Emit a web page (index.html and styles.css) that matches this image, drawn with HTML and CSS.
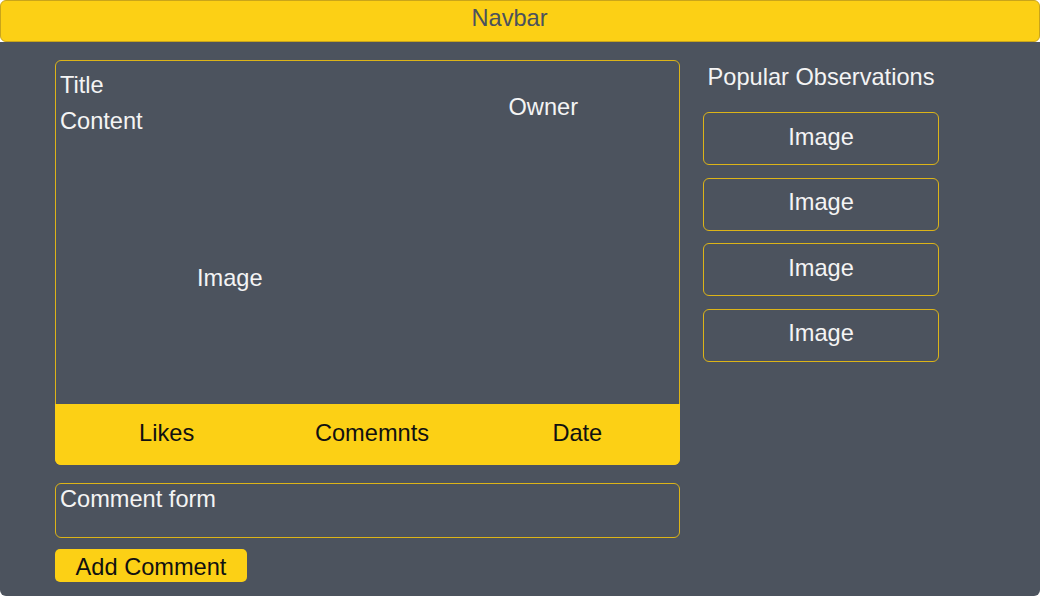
FILE: index.html
```html
<!DOCTYPE html>
<html lang="en">
<head>
<meta charset="utf-8">
<title>Observation</title>
<link rel="stylesheet" href="styles.css">
</head>
<body>
<header class="navbar">Navbar</header>
<div class="page">
  <main class="main">
    <article class="post">
      <div class="post-body">
        <div class="post-head">
          <div class="post-text">
            <div class="line">Title</div>
            <div class="line">Content</div>
          </div>
          <div class="owner">Owner</div>
        </div>
        <div class="post-image">Image</div>
      </div>
      <div class="post-foot">
        <span>Likes</span>
        <span>Comemnts</span>
        <span>Date</span>
      </div>
    </article>
    <div class="comment-form">Comment form</div>
    <button class="add-btn">Add Comment</button>
  </main>
  <aside class="side">
    <h2 class="side-title">Popular Observations</h2>
    <div class="side-list">
      <div class="side-item">Image</div>
      <div class="side-item">Image</div>
      <div class="side-item">Image</div>
      <div class="side-item">Image</div>
    </div>
  </aside>
</div>
</body>
</html>
```

FILE: styles.css
```css
html, body {
  margin: 0;
  padding: 0;
  background: #ffffff;
}
body {
  width: 1040px;
  height: 596px;
  overflow: hidden;
  font-family: "Liberation Sans", Arial, sans-serif;
  font-size: 23.6px;
  color: #f4f4f4;
}
.navbar {
  box-sizing: border-box;
  height: 42px;
  background: #fcd015;
  border: 1px solid #c9a51a;
  border-radius: 6px;
  color: #4b525d;
  text-align: center;
  line-height: 35px;
  padding-right: 21px;
}
.page {
  box-sizing: border-box;
  height: 554px;
  background: #4c535e;
  border-radius: 0 0 6px 6px;
  display: flex;
  padding: 18px 0 0 55px;
}
.main {
  width: 625px;
  display: flex;
  flex-direction: column;
  align-items: flex-start;
}
.post {
  box-sizing: border-box;
  width: 625px;
  height: 405px;
  border: 1px solid #dcb418;
  border-radius: 6px;
  display: flex;
  flex-direction: column;
}
.post-body {
  flex: 1;
  padding: 6px 0 0 4px;
}
.post-head {
  display: flex;
}
.post-text .line {
  line-height: 36px;
}
.owner {
  margin-left: auto;
  margin-right: 101px;
  margin-top: 22px;
  line-height: 36px;
}
.post-image {
  margin: 121px 0 0 137px;
  line-height: 36px;
}
.post-foot {
  height: 61px;
  margin: 0 -1px -1px -1px;
  background: #fcd015;
  border-radius: 0 0 6px 6px;
  display: grid;
  grid-template-columns: repeat(3, 1fr);
  padding-left: 9px;
  padding-bottom: 2px;
  box-sizing: border-box;
  align-items: center;
  text-align: center;
  color: #111111;
}
.comment-form {
  box-sizing: border-box;
  width: 625px;
  height: 55px;
  margin-top: 18px;
  border: 1px solid #dcb418;
  border-radius: 6px;
  padding: 0 0 0 4px;
  line-height: 30px;
}
.add-btn {
  width: 192px;
  height: 33px;
  margin-top: 11px;
  padding: 3px 0 0 0;
  border: none;
  border-radius: 5px;
  background: #fcd015;
  color: #111111;
  font-family: inherit;
  font-size: 23.6px;
  line-height: 30px;
  text-align: center;
}
.side {
  width: 236px;
  margin-left: 23px;
}
.side-title {
  margin: 2px 0 20px 0;
  font-weight: normal;
  font-size: 23.6px;
  line-height: 30px;
  text-align: center;
}
.side-list {
  display: flex;
  flex-direction: column;
  gap: 12.67px;
}
.side-item {
  box-sizing: border-box;
  height: 53px;
  border: 1px solid #dcb418;
  border-radius: 6px;
  display: flex;
  align-items: center;
  justify-content: center;
  padding-bottom: 3px;
}
```
